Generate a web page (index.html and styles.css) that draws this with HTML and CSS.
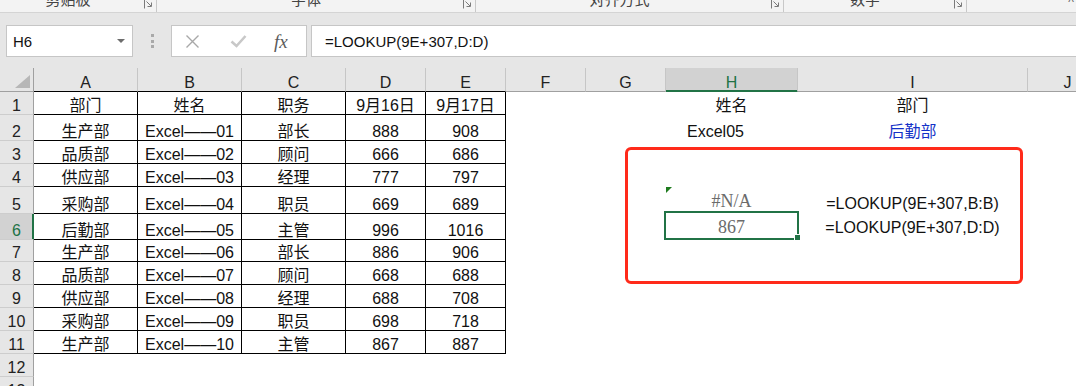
FILE: index.html
```html
<!DOCTYPE html>
<html lang="zh-CN">
<head>
    <meta charset="UTF-8">
    <meta name="viewport" content="width=device-width, initial-scale=1.0">
    <title>LOOKUP 查找最后一个值</title>
    <link rel="stylesheet" href="styles.css">
</head>
<body>
    <div class="ribbon">
        <div class="group g1">
            <span class="group-label">剪贴板</span>
            <svg class="launcher" viewBox="0 0 9 9"><path d="M0.5 0V8.5M2.5 1.5L7 6M7.5 2.5V6.5H3.5" /></svg>
        </div>
        <div class="group g2">
            <span class="group-label">字体</span>
            <svg class="launcher" viewBox="0 0 9 9"><path d="M0.5 0V8.5M2.5 1.5L7 6M7.5 2.5V6.5H3.5" /></svg>
        </div>
        <div class="group g3">
            <span class="group-label">对齐方式</span>
            <svg class="launcher" viewBox="0 0 9 9"><path d="M0.5 0V8.5M2.5 1.5L7 6M7.5 2.5V6.5H3.5" /></svg>
        </div>
        <div class="group g4">
            <span class="group-label">数字</span>
            <svg class="launcher" viewBox="0 0 9 9"><path d="M0.5 0V8.5M2.5 1.5L7 6M7.5 2.5V6.5H3.5" /></svg>
        </div>
        <div class="group g5"><span class="collapse">^</span></div>
    </div>

    <div class="formula-bar">
        <div class="name-box">
            <span>H6</span>
            <span class="dropdown"></span>
        </div>
        <div class="grip"><i></i><i></i><i></i></div>
        <div class="fx-buttons">
            <svg class="btn-cancel" viewBox="0 0 15 13"><path d="M1.5 0.5L13.5 12.5M13.5 0.5L1.5 12.5" /></svg>
            <svg class="btn-enter" viewBox="0 0 17 13"><path d="M1.5 6.5L6.5 11L15.5 1" /></svg>
            <span class="fx">fx</span>
        </div>
        <div class="formula-input">=LOOKUP(9E+307,D:D)</div>
    </div>

    <div class="sheet">
        <div class="row h24">
            <div class="rh corner"><span class="corner-mark"></span></div>
            <div class="hd w104 tb">A</div>
            <div class="hd w104 tb">B</div>
            <div class="hd w104 tb">C</div>
            <div class="hd w80 tb">D</div>
            <div class="hd w80 tb">E</div>
            <div class="hd w80">F</div>
            <div class="hd w80">G</div>
            <div class="hd w132 sel-col">H</div>
            <div class="hd w230">I</div>
            <div class="hd w80">J</div>
        </div>

        <div class="row h23">
            <div class="rh">1</div>
            <div class="c w104 t">部门</div>
            <div class="c w104 t">姓名</div>
            <div class="c w104 t">职务</div>
            <div class="c w80 t">9月16日</div>
            <div class="c w80 t">9月17日</div>
            <div class="skip"></div>
            <div class="c w132">姓名</div>
            <div class="c w230">部门</div>
        </div>

        <div class="row h26">
            <div class="rh">2</div>
            <div class="c w104 t">生产部</div>
            <div class="c w104 t">Excel——01</div>
            <div class="c w104 t">部长</div>
            <div class="c w80 t">888</div>
            <div class="c w80 t">908</div>
            <div class="skip"></div>
            <div class="c w132 left">Excel05</div>
            <div class="c w230 blue">后勤部</div>
        </div>

        <div class="row h23">
            <div class="rh">3</div>
            <div class="c w104 t">品质部</div>
            <div class="c w104 t">Excel——02</div>
            <div class="c w104 t">顾问</div>
            <div class="c w80 t">666</div>
            <div class="c w80 t">686</div>
        </div>

        <div class="row h23">
            <div class="rh">4</div>
            <div class="c w104 t">供应部</div>
            <div class="c w104 t">Excel——03</div>
            <div class="c w104 t">经理</div>
            <div class="c w80 t">777</div>
            <div class="c w80 t">797</div>
        </div>

        <div class="row h27">
            <div class="rh">5</div>
            <div class="c w104 t">采购部</div>
            <div class="c w104 t">Excel——04</div>
            <div class="c w104 t">职员</div>
            <div class="c w80 t">669</div>
            <div class="c w80 t">689</div>
            <div class="skip"></div>
            <div class="c w132 result"><span class="err-mark"></span>#N/A</div>
            <div class="c w230 up1">=LOOKUP(9E+307,B:B)</div>
        </div>

        <div class="row h26">
            <div class="rh sel-row">6</div>
            <div class="c w104 t">后勤部</div>
            <div class="c w104 t">Excel——05</div>
            <div class="c w104 t">主管</div>
            <div class="c w80 t">996</div>
            <div class="c w80 t">1016</div>
            <div class="skip"></div>
            <div class="c w132 result selected">867<span class="fill-handle"></span></div>
            <div class="c w230 up3">=LOOKUP(9E+307,D:D)</div>
        </div>

        <div class="row h22">
            <div class="rh">7</div>
            <div class="c w104 t">生产部</div>
            <div class="c w104 t">Excel——06</div>
            <div class="c w104 t">部长</div>
            <div class="c w80 t">886</div>
            <div class="c w80 t">906</div>
        </div>

        <div class="row h23">
            <div class="rh">8</div>
            <div class="c w104 t">品质部</div>
            <div class="c w104 t">Excel——07</div>
            <div class="c w104 t">顾问</div>
            <div class="c w80 t">668</div>
            <div class="c w80 t">688</div>
        </div>

        <div class="row h23">
            <div class="rh">9</div>
            <div class="c w104 t">供应部</div>
            <div class="c w104 t">Excel——08</div>
            <div class="c w104 t">经理</div>
            <div class="c w80 t">688</div>
            <div class="c w80 t">708</div>
        </div>

        <div class="row h23">
            <div class="rh">10</div>
            <div class="c w104 t">采购部</div>
            <div class="c w104 t">Excel——09</div>
            <div class="c w104 t">职员</div>
            <div class="c w80 t">698</div>
            <div class="c w80 t">718</div>
        </div>

        <div class="row h23">
            <div class="rh">11</div>
            <div class="c w104 t">生产部</div>
            <div class="c w104 t">Excel——10</div>
            <div class="c w104 t">主管</div>
            <div class="c w80 t">867</div>
            <div class="c w80 t">887</div>
        </div>

        <div class="row h23">
            <div class="rh">12</div>
        </div>

        <div class="row h23">
            <div class="rh">13</div>
        </div>

        <div class="annotation"></div>
    </div>
</body>
</html>
```

FILE: styles.css
```css
body {
    margin: 0;
    width: 1076px;
    height: 386px;
    overflow: hidden;
    background: #fff;
    font-family: "Liberation Sans", "Noto Sans CJK SC", sans-serif;
    color: #111;
}

/* ribbon group captions, cut off at the top */
.ribbon {
    display: flex;
    height: 12px;
    border-bottom: 1px solid #d4d4d4;
    background: #f3f3f3;
    overflow: hidden;
    font-size: 15px;
    color: #444;
}

.group {
    display: flex;
    align-items: flex-start;
    box-sizing: border-box;
    border-right: 1px solid #c8c8c8;
}

.g1 { width: 157px; }
.g2 { width: 319px; }
.g3 { width: 308px; }
.g4 { width: 183px; }
.g5 {
    flex: 1;
    border-right: none;
    justify-content: flex-end;
}

.group-label {
    flex: 1;
    text-align: center;
    line-height: 15px;
    margin-top: -8px;
    padding-right: 8px;
}

.launcher {
    flex: none;
    width: 9px;
    height: 9px;
    margin-right: 3px;
    fill: none;
    stroke: #7a7a7a;
    stroke-width: 1;
}

.collapse {
    font-size: 12px;
    line-height: 12px;
    margin: -4px 2px 0 0;
    color: #666;
}

/* name box + formula input */
.formula-bar {
    display: flex;
    align-items: flex-start;
    height: 55px;
    padding: 12px 0 0 6px;
    box-sizing: border-box;
    background: #e6e6e6;
}

.name-box {
    display: flex;
    align-items: center;
    width: 127px;
    height: 32px;
    box-sizing: border-box;
    padding-left: 6px;
    border: 1px solid #c6c6c6;
    background: #fff;
    font-size: 15px;
}

.dropdown {
    margin-left: auto;
    margin-right: 7px;
    width: 0;
    height: 0;
    border-left: 4px solid transparent;
    border-right: 4px solid transparent;
    border-top: 4px solid #6d6d6d;
}

.grip {
    display: flex;
    flex-direction: column;
    align-items: center;
    gap: 2.5px;
    width: 38px;
    padding-top: 9px;
}

.grip i {
    width: 3px;
    height: 3px;
    background: #a9a9a9;
}

.fx-buttons {
    display: flex;
    align-items: center;
    width: 136px;
    height: 32px;
    box-sizing: border-box;
    border: 1px solid #c6c6c6;
    background: #fff;
}

.btn-cancel {
    width: 15px;
    height: 13px;
    margin-left: 13px;
    fill: none;
    stroke: #a8a8a8;
    stroke-width: 1.4;
}

.btn-enter {
    width: 17px;
    height: 13px;
    margin-left: 30px;
    fill: none;
    stroke: #c8c8c8;
    stroke-width: 2.6;
}

.fx {
    margin-left: 27px;
    font-family: "Liberation Serif", serif;
    font-style: italic;
    font-size: 19px;
    line-height: 19px;
    color: #5b5b5b;
}

.formula-input {
    flex: 1;
    display: flex;
    align-items: center;
    height: 32px;
    margin-left: 4px;
    padding-left: 13px;
    box-sizing: border-box;
    border: 1px solid #c6c6c6;
    border-right: none;
    background: #fff;
    font-size: 15px;
}

/* worksheet */
.sheet {
    position: relative;
    font-size: 16px;
}

.row {
    display: flex;
}

.h22 { height: 22px; }
.h23 { height: 23px; }
.h24 { height: 24px; }
.h26 { height: 26px; }
.h27 { height: 27px; }

.w80 { width: 80px; }
.w104 { width: 104px; }
.w132 { width: 132px; }
.w230 { width: 230px; }

.skip {
    flex: none;
    width: 160px;
}

.rh, .hd, .c {
    flex: none;
    display: flex;
    align-items: flex-end;
    justify-content: center;
    box-sizing: border-box;
    white-space: nowrap;
}

.rh {
    width: 34px;
    border-right: 1px solid #a0a0a0;
    border-bottom: 1px solid #cdcdcd;
    background: #e6e6e6;
    line-height: 17px;
    color: #222;
}

.rh.corner {
    position: relative;
    border-bottom-color: #a0a0a0;
}

.corner-mark {
    position: absolute;
    right: 3px;
    bottom: 3px;
    width: 0;
    height: 0;
    border-left: 15px solid transparent;
    border-bottom: 13px solid #b7b7b7;
}

.hd {
    border-right: 1px solid #c6c6c6;
    border-bottom: 1px solid #a0a0a0;
    background: #e6e6e6;
    line-height: 16px;
    color: #222;
}

.hd.tb {
    border-bottom-color: #000;
}

.sel-col {
    background: #d2d2d2;
    color: #217346;
    border-bottom-color: #217346;
    box-shadow: inset 0 -1px #217346;
}

.sel-row {
    background: #d2d2d2;
    color: #217346;
    border-right-color: #217346;
    box-shadow: inset -1px 0 #217346;
}

.c {
    border-right: 1px solid transparent;
    border-bottom: 1px solid transparent;
    line-height: 17px;
}

.c.t {
    border-right-color: #000;
    border-bottom-color: #000;
}

.c.left {
    justify-content: flex-start;
    padding-left: 21px;
}

.blue {
    color: #1432c8;
}

.up1 { padding-bottom: 1px; }
.up3 { padding-bottom: 3px; }

.result {
    position: relative;
    padding-bottom: 3px;
    font-family: "Liberation Serif", serif;
    font-size: 18px;
    color: #6b6b6b;
}

.err-mark {
    position: absolute;
    top: 0;
    left: 0;
    width: 0;
    height: 0;
    border-top: 6px solid #1e7b1e;
    border-right: 6px solid transparent;
}

.selected::after {
    content: '';
    position: absolute;
    top: -3px;
    left: -2px;
    right: -2px;
    bottom: -1px;
    border: 2px solid #217346;
}

.fill-handle {
    position: absolute;
    right: -3px;
    bottom: -1px;
    width: 5px;
    height: 5px;
    background: #217346;
    outline: 1px solid #fff;
    z-index: 2;
}

.annotation {
    position: absolute;
    left: 625px;
    top: 79px;
    width: 398px;
    height: 137px;
    box-sizing: border-box;
    border: 3px solid #ff2a1a;
    border-radius: 6px;
    pointer-events: none;
}
```
